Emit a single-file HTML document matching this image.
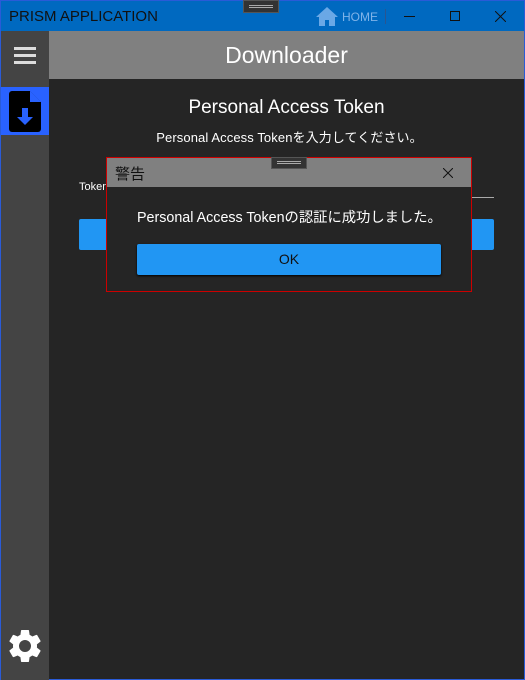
<!DOCTYPE html>
<html><head><meta charset="utf-8"><style>
*{margin:0;padding:0;box-sizing:border-box}
body{width:525px;height:680px;overflow:hidden;background:#252525;font-family:"Liberation Sans","Noto Sans CJK JP",sans-serif;position:relative}
.a{position:absolute}
</style></head><body>
<div class="a" style="left:0;top:0;width:525px;height:680px;border:1px solid #2a5bd7;border-top:none"></div>
<div class="a" style="left:0;top:0;width:525px;height:31px;background:#0069c0;border:1px solid #2a5bd7;border-bottom:none"></div>
<div class="a" style="left:9px;top:8px;font-size:15px;color:#111">PRISM APPLICATION</div>
<div class="a" style="left:243px;top:0;width:36px;height:13px;background:#333;border:1px solid #555"><div style="margin:4px 5px 0;height:3px;border-top:1px solid #aaa;border-bottom:1px solid #aaa"></div></div>
<svg class="a" style="left:316px;top:7px" width="22" height="19" viewBox="0 0 22 19"><path d="M11 0L0 10h3v9h6v-6h4v6h6v-9h3z" fill="#6aa8e6"/></svg>
<div class="a" style="left:342px;top:10px;font-size:12px;color:#7fb3e8">HOME</div>
<div class="a" style="left:385px;top:9px;width:1px;height:15px;background:#2a5590"></div>
<div class="a" style="left:404px;top:16px;width:11px;height:1px;background:#111"></div>
<div class="a" style="left:450px;top:11px;width:10px;height:10px;border:1px solid #111"></div>
<svg class="a" style="left:495px;top:11px" width="11" height="11"><path d="M0 0L11 11M11 0L0 11" stroke="#111" stroke-width="1"/></svg>
<div class="a" style="left:1px;top:31px;width:48px;height:649px;background:#444"></div>
<div class="a" style="left:14px;top:47px;width:22px;height:3px;background:#ddd;box-shadow:0 7px 0 #ddd,0 14px 0 #ddd"></div>
<div class="a" style="left:1px;top:87px;width:48px;height:48px;background:#2962ff"></div>
<svg class="a" style="left:9px;top:91px" width="32" height="41" viewBox="0 0 32 41"><path d="M3 0h18l11 11v27a3 3 0 0 1-3 3H3a3 3 0 0 1-3-3V3a3 3 0 0 1 3-3z" fill="#000"/><path d="M21 0v11h11z" fill="#2962ff"/><path d="M21 0L32 11H21z" fill="#2962ff"/><path d="M13 17h6v9h5l-8 8-8-8h5z" fill="#2962ff"/></svg>
<svg class="a" style="left:5px;top:626px" width="40" height="40" viewBox="0 0 24 24"><path fill="#fff" d="M19.14 12.94c.04-.3.06-.61.06-.94 0-.32-.02-.64-.07-.94l2.03-1.58a.49.49 0 0 0 .12-.61l-1.920-3.32a.49.49 0 0 0-.59-.22l-2.39.96c-.5-.38-1.03-.7-1.62-.94l-.36-2.54a.48.48 0 0 0-.48-.41h-3.84c-.24 0-.43.17-.47.41l-.36 2.54c-.59.24-1.13.57-1.62.94l-2.39-.96a.48.48 0 0 0-.59.22L2.74 8.87c-.12.21-.08.47.12.61l2.03 1.58c-.05.3-.09.63-.09.94s.02.64.07.94l-2.03 1.58a.49.49 0 0 0-.12.61l1.92 3.32c.12.22.37.29.59.22l2.39-.96c.5.38 1.03.7 1.62.94l.36 2.54c.05.24.24.41.48.41h3.84c.24 0 .44-.17.47-.41l.36-2.54c.59-.24 1.13-.56 1.62-.94l2.39.96c.22.08.47 0 .59-.22l1.92-3.32c.12-.22.07-.47-.12-.61l-2.01-1.58zM12 15.6A3.6 3.6 0 1 1 12 8.4a3.6 3.6 0 0 1 0 7.2z"/></svg>
<div class="a" style="left:49px;top:31px;width:475px;height:48px;background:#808080;color:#fff;font-size:23px;text-align:center;line-height:48px">Downloader</div>
<div class="a" style="left:49px;top:97px;width:475px;text-align:center;color:#fff;font-size:19px">Personal Access Token</div>
<div class="a" style="left:49px;top:127px;width:475px;text-align:center;color:#fff;font-size:13px;letter-spacing:0.1px;padding-left:6px">Personal Access Tokenを入力してください。</div>
<div class="a" style="left:79px;top:181px;color:#fff;font-size:11px">Token</div>
<div class="a" style="left:110px;top:197px;width:384px;height:1px;background:#aaa"></div>
<div class="a" style="left:79px;top:219px;width:415px;height:31px;background:#2196f3;border-radius:2px"></div>
<div class="a" style="left:106px;top:157px;width:366px;height:135px;background:#252525;border:1px solid #c00"></div>
<div class="a" style="left:107px;top:158px;width:364px;height:29px;background:#808080"></div>
<div class="a" style="left:115px;top:163px;font-size:15px;color:#111">警告</div>
<svg class="a" style="left:443px;top:168px" width="10" height="10"><path d="M0 0L10 10M10 0L0 10" stroke="#111" stroke-width="1"/></svg>
<div class="a" style="left:271px;top:157px;width:36px;height:12px;background:#333;border:1px solid #555"><div style="margin:3px 5px 0;height:3px;border-top:1px solid #aaa;border-bottom:1px solid #aaa"></div></div>
<div class="a" style="left:137px;top:206px;color:#fff;font-size:14.3px">Personal Access Tokenの認証に成功しました。</div>
<div class="a" style="left:137px;top:244px;width:304px;height:31px;background:#2196f3;border-radius:2px;box-shadow:0 1px 2px #000;text-align:center;line-height:31px;font-size:14px;color:#111">OK</div>
</body></html>
